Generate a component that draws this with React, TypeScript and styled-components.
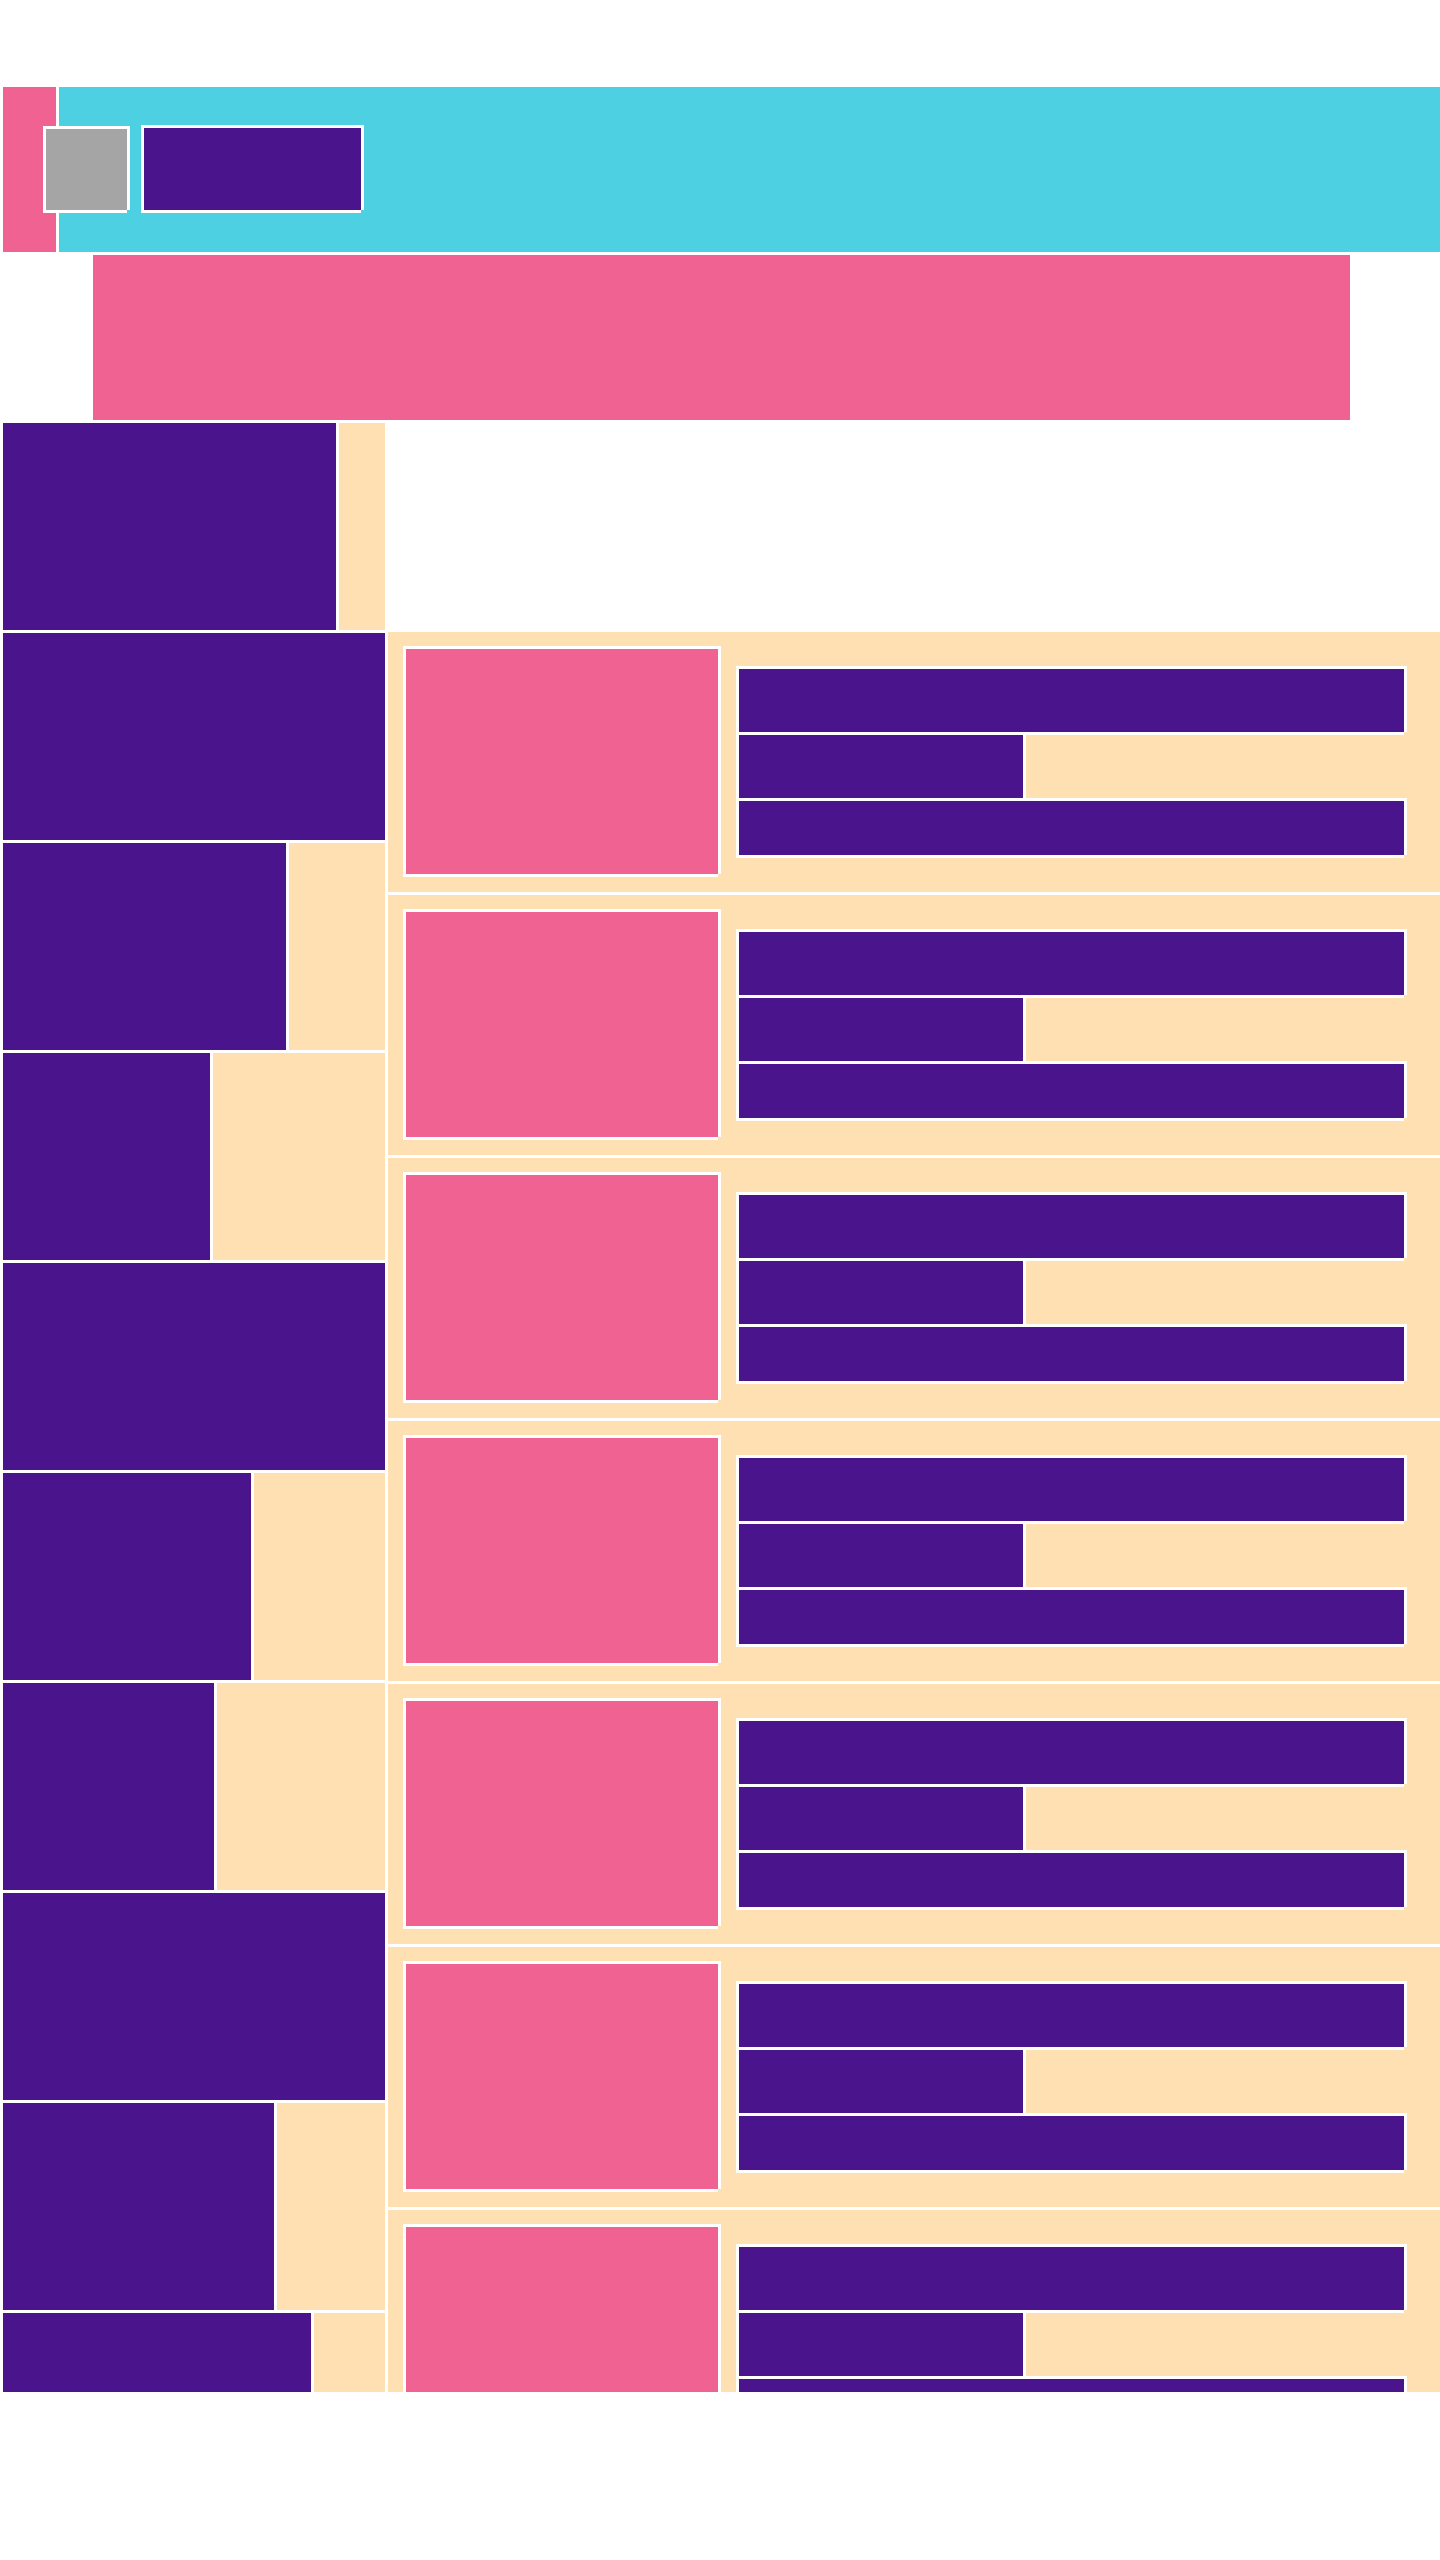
import React from "react";
import styled, { createGlobalStyle, css } from "styled-components";

const GlobalStyle = createGlobalStyle`
  html, body {
    margin: 0;
    padding: 0;
    background: #fff;
  }
`;

const PINK = "#f06292";
const CYAN = "#4dd0e1";
const PURPLE = "#4a148c";
const PEACH = "#ffe0b2";
const GREY = "#a5a5a5";

const whiteEdge = css`
  box-shadow: -3px -3px 0 #fff, 3px -3px 0 #fff, -3px 3px 0 #fff, 3px 0 0 #fff, 0 3px 0 #fff;
`;

const Page = styled.div`
  padding: 87px 0 0 3px;
  min-height: 2560px;
  box-sizing: border-box;
`;

const Frame = styled.div`
  display: flex;
  flex-direction: column;
  gap: 3px;
  height: 2305px;
  overflow: hidden;
`;

const Header = styled.header`
  position: relative;
  display: flex;
  flex: none;
  gap: 3px;
  height: 165px;
`;

const HeaderTab = styled.div`
  flex: none;
  width: 53px;
  background: ${PINK};
`;

const HeaderBar = styled.div`
  flex: 1;
  background: ${CYAN};
`;

const Brand = styled.div`
  position: absolute;
  top: 41px;
  left: 43px;
  display: flex;
  align-items: flex-end;
  gap: 17px;
`;

const Logo = styled.div`
  width: 81px;
  height: 81px;
  background: ${GREY};
  ${whiteEdge}
`;

const Title = styled.div`
  width: 217px;
  height: 82px;
  background: ${PURPLE};
  ${whiteEdge}
`;

const Banner = styled.div`
  flex: none;
  width: 1257px;
  height: 165px;
  margin-left: 90px;
  background: ${PINK};
`;

const Main = styled.main`
  display: grid;
  grid-template-columns: 382px 1052px;
  gap: 3px;
  align-items: start;
`;

const Sidebar = styled.aside`
  display: flex;
  flex-direction: column;
  gap: 3px;
`;

const SideRow = styled.div`
  display: flex;
  flex: none;
  gap: 3px;
  height: 207px;
`;

const SideFill = styled.div<{ $width: number }>`
  flex: none;
  width: ${(p) => p.$width}px;
  background: ${PURPLE};
`;

const SideTrack = styled.div`
  flex: 1;
  background: ${PEACH};
`;

const CardList = styled.section`
  display: flex;
  flex-direction: column;
  gap: 3px;
  margin-top: 209px;
`;

const Card = styled.article`
  display: flex;
  flex: none;
  align-items: center;
  gap: 21px;
  height: 260px;
  padding: 0 36px 0 18px;
  background: ${PEACH};
`;

const Thumb = styled.div`
  flex: none;
  align-self: flex-start;
  width: 312px;
  height: 225px;
  margin-top: 17px;
  background: ${PINK};
  ${whiteEdge}
`;

const CardBody = styled.div`
  display: flex;
  flex: 1;
  flex-direction: column;
  gap: 3px;
`;

const Line = styled.div<{ $width?: number; $height: number }>`
  width: ${(p) => (p.$width ? `${p.$width}px` : "100%")};
  height: ${(p) => p.$height}px;
  background: ${PURPLE};
  ${whiteEdge}
`;

const sideRows = [333, 382, 283, 207, 382, 248, 211, 382, 271, 308];
const cards = [0, 1, 2, 3, 4, 5, 6];

export default function App() {
  return (
    <Page>
      <GlobalStyle />
      <Frame>
        <Header>
          <HeaderTab />
          <HeaderBar />
          <Brand>
            <Logo />
            <Title />
          </Brand>
        </Header>
        <Banner />
        <Main>
          <Sidebar>
            {sideRows.map((width, i) => (
              <SideRow key={i}>
                <SideFill $width={width} />
                {width < 382 && <SideTrack />}
              </SideRow>
            ))}
          </Sidebar>
          <CardList>
            {cards.map((id) => (
              <Card key={id}>
                <Thumb />
                <CardBody>
                  <Line $height={63} />
                  <Line $height={63} $width={284} />
                  <Line $height={54} />
                </CardBody>
              </Card>
            ))}
          </CardList>
        </Main>
      </Frame>
    </Page>
  );
}
